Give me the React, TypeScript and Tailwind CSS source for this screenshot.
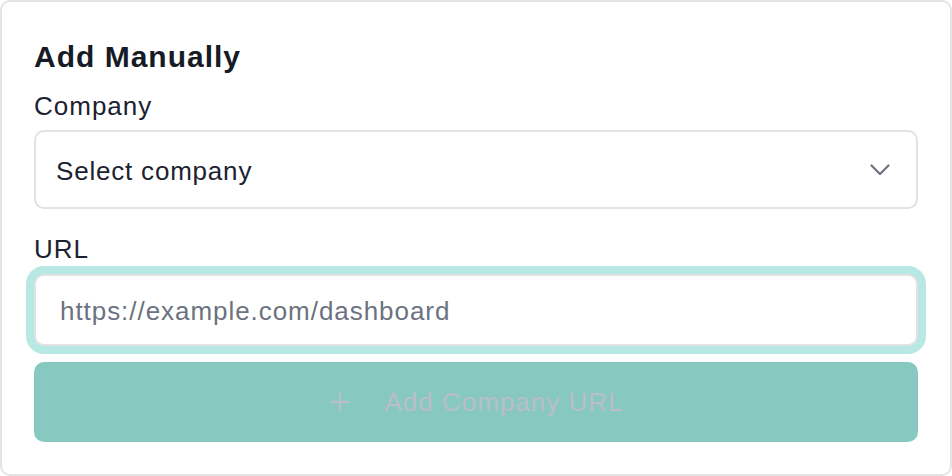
import React from "react";

export default function App() {
  const font = { fontFamily: '"Liberation Sans", Arial, sans-serif' };
  return (
    <div className="w-[952px] h-[476px] bg-white" style={font}>
      <div className="w-[952px] h-[476px] border-2 border-[#e4e4e4] rounded-[10px] bg-white px-[32px] pt-[36px] flex flex-col">
        <h2 className="text-[30px] leading-[36px] font-bold tracking-[1px] text-[#161b26] pt-[1px]">
          Add Manually
        </h2>
        <label className="mt-[15px] text-[26px] leading-[32px] tracking-[1px] text-[#1c2230]">
          Company
        </label>
        <div className="mt-[8px] h-[79px] border-2 border-[#e2e2e2] rounded-[10px] bg-white flex items-center justify-between pl-[20px] pr-[26px]">
          <span className="text-[26px] leading-[32px] pt-[3px] tracking-[0.8px] text-[#1c2230]">Select company</span>
          <svg width="20" height="12" viewBox="0 0 20 12" fill="none">
            <polyline
              points="1.5,1.5 10,10 18.5,1.5"
              stroke="#6b7280"
              strokeWidth="2.2"
              strokeLinecap="round"
              strokeLinejoin="round"
            />
          </svg>
        </div>
        <label className="mt-[24px] text-[26px] leading-[32px] tracking-[1px] text-[#1c2230]">
          URL
        </label>
        <div className="mt-[9px] h-[72px] border-2 border-[#e2e2e2] rounded-[10px] bg-white shadow-[0_0_0_8px_#b8e8e3] flex items-center pl-[24px]">
          <span className="text-[26px] leading-[32px] pt-[2px] tracking-[0.95px] text-[#6b7280]">
            https://example.com/dashboard
          </span>
        </div>
        <button className="mt-[16px] h-[80px] rounded-[10px] bg-[#87c9c0] flex items-center justify-center">
          <svg width="22" height="22" viewBox="0 0 22 22" fill="none" className="mr-[34px]">
            <path d="M11 1.5V20.5M1.5 11H20.5" stroke="#bbbdca" strokeWidth="2" />
          </svg>
          <span className="text-[26px] tracking-[1px] text-[#bbbdca]">Add Company URL</span>
        </button>
      </div>
    </div>
  );
}
